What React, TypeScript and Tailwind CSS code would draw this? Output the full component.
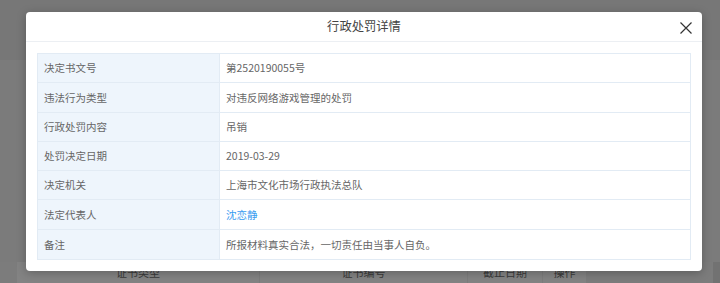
const rows: { label: string; value: string; link?: boolean }[] = [
  { label: "决定书文号", value: "第2520190055号" },
  { label: "违法行为类型", value: "对违反网络游戏管理的处罚" },
  { label: "行政处罚内容", value: "吊销" },
  { label: "处罚决定日期", value: "2019-03-29" },
  { label: "决定机关", value: "上海市文化市场行政执法总队" },
  { label: "法定代表人", value: "沈恋静", link: true },
  { label: "备注", value: "所报材料真实合法，一切责任由当事人自负。" },
];

const font = { fontFamily: '"Noto Sans CJK SC", "Noto Sans", sans-serif' };

export default function App() {
  return (
    <div className="relative w-[720px] h-[283px] overflow-hidden bg-[#7a7a7a]" style={font}>
      {/* page behind the overlay */}
      <div className="flex flex-col h-full">
        <div className="h-[60px] bg-[#777777]" />
        <div className="flex-1 bg-[#7b7b7b]" />
        <div className="flex h-[21px] text-[11px] text-[#3a3a3a]">
          <div className="w-[17px] bg-[#7c7c7c]" />
          <div className="flex w-[569px] bg-[#838383]">
            <div className="w-[243px] flex items-center justify-center border-r border-[#7c7c7c]">证书类型</div>
            <div className="w-[208px] flex items-center justify-center border-r border-[#7c7c7c]">证书编号</div>
            <div className="w-[75px] flex items-center justify-center border-r border-[#7c7c7c]">截止日期</div>
            <div className="flex-1 flex items-center justify-center">操作</div>
          </div>
          <div className="w-[127px] bg-[#7c7c7c]" />
          <div className="flex-1 bg-[#727272]" />
        </div>
      </div>

      {/* modal */}
      <div className="absolute left-[26px] top-[12px] w-[676px] h-[259px] rounded-[4px] bg-white shadow-[0_2px_10px_rgba(0,0,0,0.25)] flex flex-col">
        <div className="relative h-[30px] flex items-center justify-center border-b border-[#eceff3]">
          <span className="text-[12.3px] text-[#444]">行政处罚详情</span>
          <svg className="absolute right-[10px] top-[10px]" width="12" height="12" viewBox="0 0 12 12">
            <path d="M0.5 0.5L11.5 11.5M11.5 0.5L0.5 11.5" stroke="#333" strokeWidth="1.2" fill="none" />
          </svg>
        </div>
        <div className="px-[11px] pt-[11px]">
          <div className="border border-[#e2ebf4]">
            {rows.map((r, i) => (
              <div
                key={r.label}
                className={`flex h-[29.3px] text-[10.5px] ${i < rows.length - 1 ? "border-b border-[#e2ebf4]" : ""}`}
              >
                <div className="w-[182px] bg-[#eef5fc] border-r border-[#e2ebf4] flex items-center pl-[6px] text-[#666]">
                  {r.label}
                </div>
                <div className={`flex-1 flex items-center pl-[6px] ${r.link ? "text-[#3a9cf0]" : "text-[#666]"}`}>
                  {r.value}
                </div>
              </div>
            ))}
          </div>
        </div>
      </div>
    </div>
  );
}
